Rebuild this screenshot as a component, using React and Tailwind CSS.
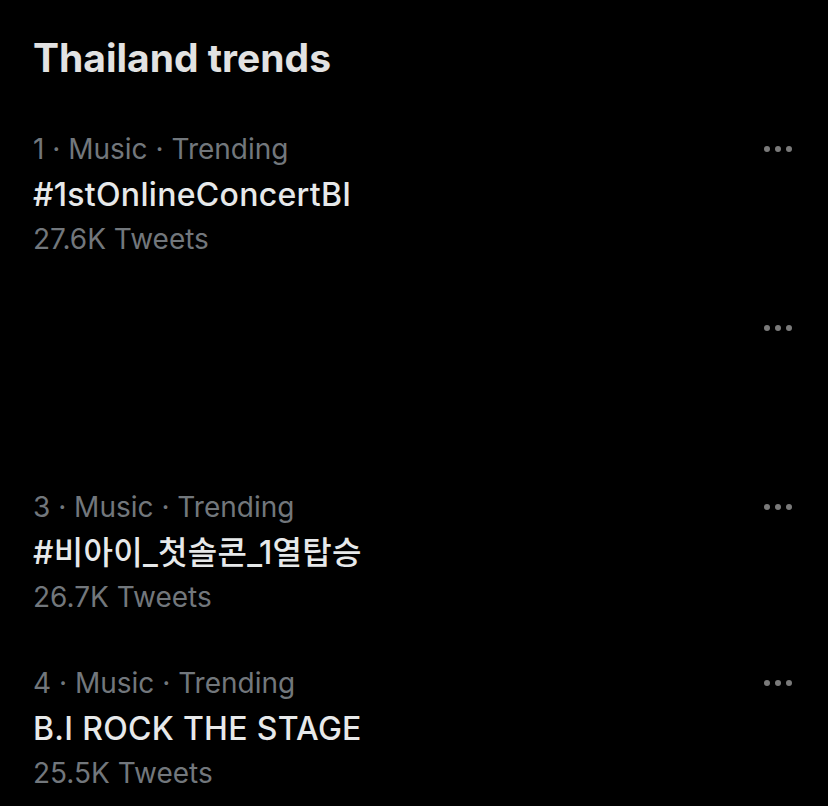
import React from "react";

const trends = [
  { meta: "1 · Music · Trending", name: "#1stOnlineConcertBI", count: "27.6K Tweets", h: "h-[179px]" },
  { empty: true, h: "h-[179px]" },
  { meta: "3 · Music · Trending", name: "#비아이_첫솔콘_1열탑승", count: "26.7K Tweets", h: "h-[176px]" },
  { meta: "4 · Music · Trending", name: "B.I ROCK THE STAGE", count: "25.5K Tweets", h: "h-[130px]" },
];

function Dots() {
  return (
    <div className="mt-[19px] flex gap-[5px]">
      <span className="block h-[6px] w-[6px] rounded-full bg-[#7a7a7a]" />
      <span className="block h-[6px] w-[6px] rounded-full bg-[#7a7a7a]" />
      <span className="block h-[6px] w-[6px] rounded-full bg-[#7a7a7a]" />
    </div>
  );
}

export default function App() {
  return (
    <div
      className="w-[828px] h-[806px] overflow-hidden bg-black pl-[33px] pr-[36px] pt-[36px]"
      style={{ fontFamily: 'Inter, "Noto Sans CJK KR", sans-serif' }}
    >
      <h1 className="mb-[47px] text-[39px] font-bold leading-[44px] text-[#e2e2e2]">Thailand trends</h1>
      {trends.map((t, i) => (
        <div key={i} className={`flex justify-between ${t.h}`}>
          {t.empty ? (
            <div />
          ) : (
            <div>
              <div className="text-[28px] leading-[45px] text-[#72777c]">{t.meta}</div>
              <div className="text-[32px] font-medium leading-[45px] tracking-[0.3px] text-[#e7e9ea]">{t.name}</div>
              <div className="text-[28px] leading-[45px] text-[#72777c]">{t.count}</div>
            </div>
          )}
          <Dots />
        </div>
      ))}
    </div>
  );
}
